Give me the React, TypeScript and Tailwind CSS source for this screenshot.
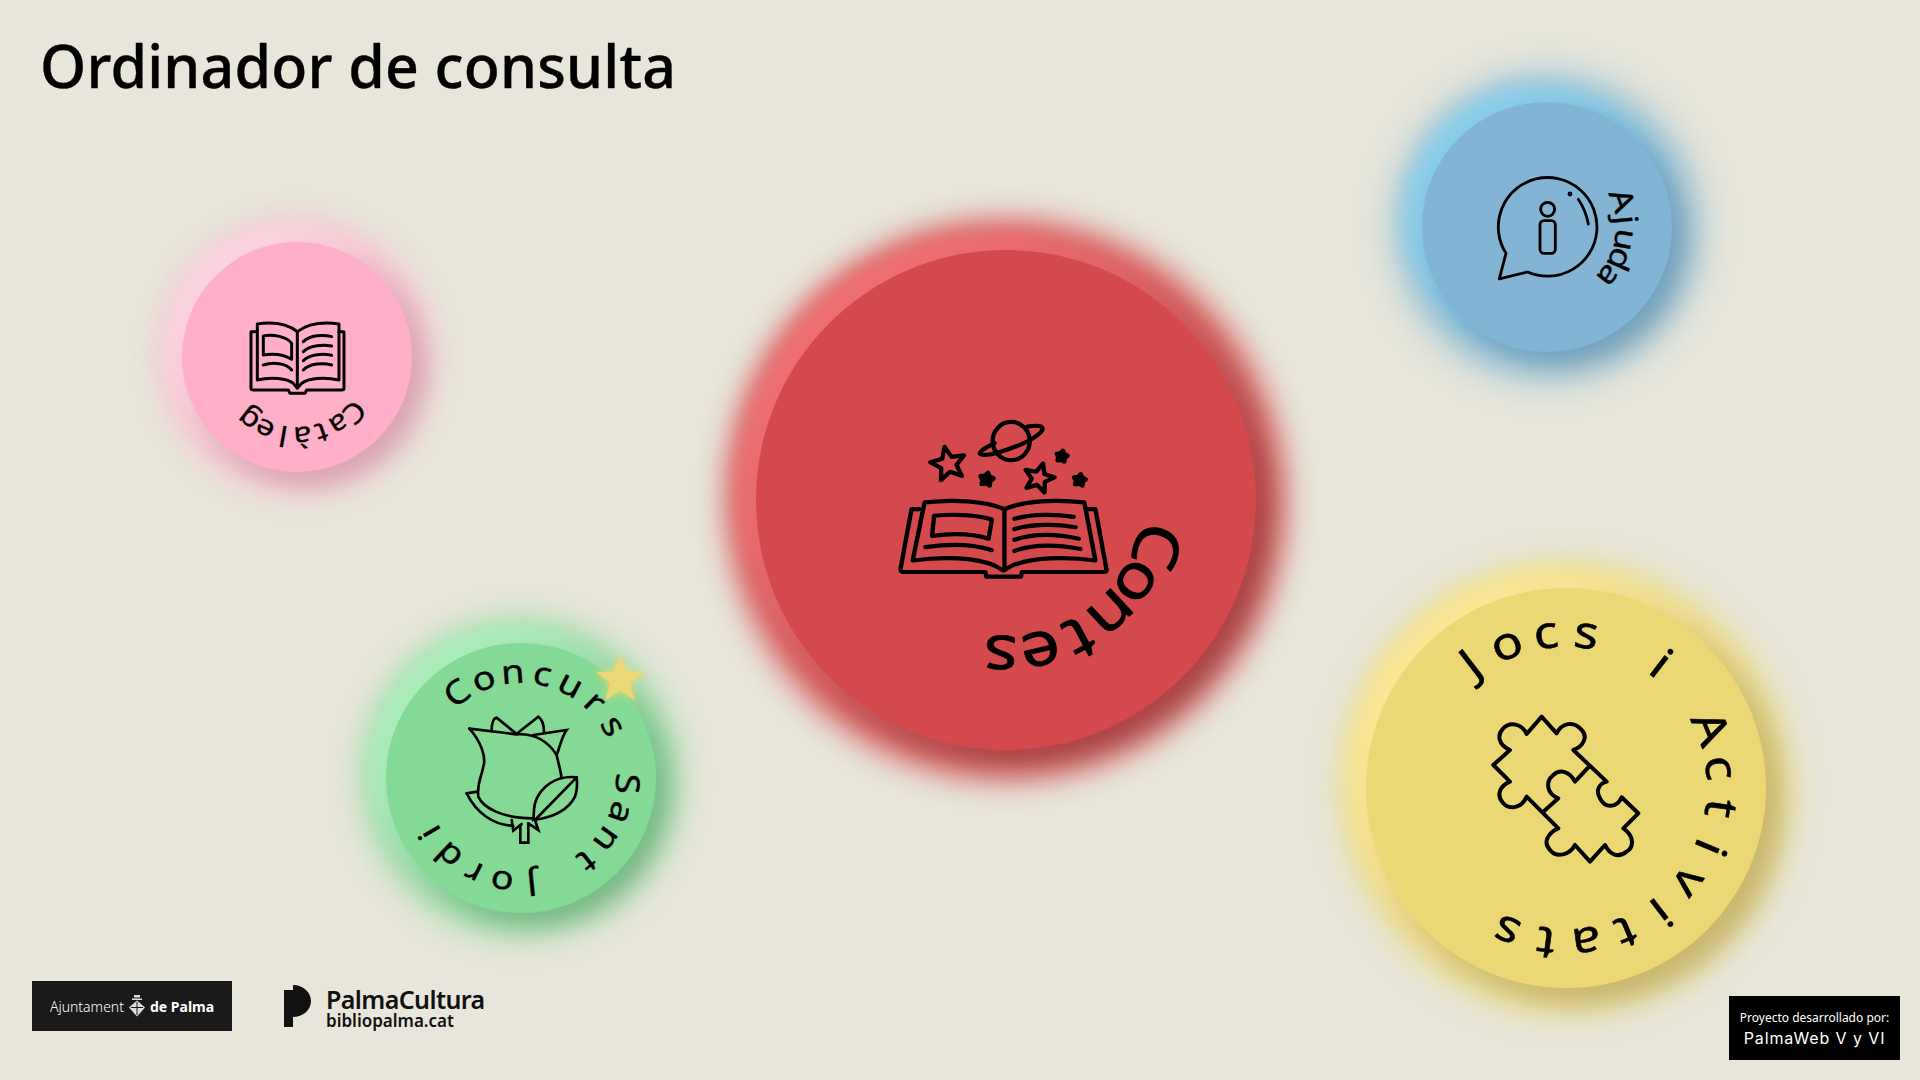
import React from 'react';

const FONT = "'Noto Sans', 'Open Sans', sans-serif";

function starPoints(cx: number, cy: number, r: number, rot: number, inner = 0.45) {
    const pts: string[] = [];
    for (let i = 0; i < 10; i++) {
        const a = ((rot + i * 36 - 90) * Math.PI) / 180;
        const rr = i % 2 === 0 ? r : r * inner;
        pts.push(`${(cx + rr * Math.cos(a)).toFixed(1)},${(cy + rr * Math.sin(a)).toFixed(1)}`);
    }
    return pts.join(' ');
}

interface CurvedProps {
    text: string;
    size: number;
    radius: number;
    fontSize: number;
    start: number;
    step: number;
}

function CurvedText({ text, size, radius, fontSize, start, step }: CurvedProps) {
    const c = size / 2;
    return (
        <g fontFamily={FONT} fontSize={fontSize} fill="#000" stroke="#000" strokeWidth={fontSize * 0.012} strokeLinejoin="round">
            {text.split('').map((ch, i) =>
                ch === ' ' ? null : (
                    <text key={i} textAnchor="middle" transform={`rotate(${start + i * step} ${c} ${c}) translate(${c} ${c - radius}) scale(1.14 1)`}>
                        {ch}
                    </text>
                ),
            )}
        </g>
    );
}

interface BubbleProps {
    className: string;
    size: number;
    children: React.ReactNode;
}

function Bubble({ className, size, children }: BubbleProps) {
    return (
        <div className={`absolute rounded-full ${className}`}>
            <svg width={size} height={size} viewBox={`0 0 ${size} ${size}`} className="block">
                {children}
            </svg>
        </div>
    );
}

export default function App() {
    return (
        <div className="relative flex h-screen w-full flex-col justify-between overflow-hidden bg-[#e8e6da]" style={{ fontFamily: FONT }}>
            <h1 className="pl-[40px] pt-[26px] text-[59px] leading-[78px] font-medium tracking-[0.2px] text-black [-webkit-text-stroke:0.4px_#000]">Ordinador de consulta</h1>

            {/* Catàleg */}
            <Bubble
                size={230}
                className="left-[182px] top-[242px] h-[230px] w-[230px] bg-[#ffafc8] shadow-[12px_12px_22px_2px_rgba(120,70,90,0.24),-11px_-11px_20px_4px_rgba(252,215,228,0.9),0_0_34px_20px_rgba(255,175,200,0.75)]"
            >
                <g transform="translate(-42,-42) scale(0.3333)" fill="none" stroke="#000" strokeWidth="9" strokeLinejoin="round" strokeLinecap="round">
                    <path d="M350,395 L333,395 L333,565 Q333,570 340,570 L445,570 L450,580 L495,580 L500,570 L605,570 Q612,570 612,565 L612,395 L597,395" />
                    <path d="M472,395 C440,370 400,365 352,372 L352,540 C395,530 440,535 460,550 L472,565 L485,550 C505,535 550,530 597,540 L597,372 C545,365 505,370 472,395 Z" />
                    <path d="M472,395 L472,560" />
                    <path d="M370,408 C400,402 440,410 455,430 L455,478 C430,462 400,460 370,465 Z" />
                    <path d="M370,495 C400,485 440,490 455,510" />
                    <path d="M490,425 C510,405 550,403 575,410" />
                    <path d="M490,455 C510,435 550,433 575,438" />
                    <path d="M490,482 C510,462 550,460 575,466" />
                    <path d="M490,510 C510,490 550,488 575,495" />
                </g>
                <CurvedText text="Catàleg" size={230} radius={70} fontSize={28} start={134} step={14} />
            </Bubble>

            {/* Contes */}
            <Bubble
                size={500}
                className="left-[756px] top-[250px] h-[500px] w-[500px] bg-[#d4494b] shadow-[14px_14px_24px_2px_rgba(70,30,30,0.3),-12px_-12px_22px_4px_rgba(240,115,115,1),0_0_32px_28px_rgba(212,73,75,0.95)]"
            >
                <g transform="translate(-56,-50) scale(0.3954,0.3827)" fill="none" stroke="#000" strokeWidth="11" strokeLinejoin="round" strokeLinecap="round">
                    <path d="M555,808 L535,808 L507,965 Q507,972 515,972 L722,972 L724,984 L812,984 L814,972 L1022,972 Q1030,972 1028,965 L1000,808 L980,808" />
                    <path d="M770,808 C720,785 640,782 568,790 L538,942 C620,930 700,935 745,955 L767,968 L790,955 C840,935 920,930 1000,942 L972,790 C900,782 820,785 770,808 Z" />
                    <path d="M770,808 L770,968" />
                    <path d="M592,825 C640,820 700,822 738,835 L730,885 C690,872 640,870 587,878 Z" />
                    <path d="M570,907 C630,898 690,898 738,915" />
                    <path d="M795,833 C840,820 900,820 945,828" />
                    <path d="M795,860 C840,846 900,846 950,855" />
                    <path d="M795,888 C840,872 900,872 958,885" />
                    <path d="M795,917 C840,900 900,900 962,912" />
                    <ellipse cx="787" cy="630" rx="47" ry="50" />
                    <path d="M745,635 C715,650 700,662 712,665 C730,670 790,650 830,630 C860,612 875,598 862,592 C855,588 840,590 828,592" />
                    <polygon points={starPoints(628, 690, 46, -12)} />
                    <polygon points={starPoints(857, 727, 40, 15)} />
                    <polygon points={starPoints(725, 730, 18, 10, 0.6)} fill="#000" />
                    <polygon points={starPoints(915, 670, 15, 10, 0.6)} fill="#000" />
                    <polygon points={starPoints(960, 732, 16, 10, 0.6)} fill="#000" />
                </g>
                <CurvedText text="Contes" size={500} radius={136} fontSize={62} start={107} step={15} />
            </Bubble>

            {/* Concurs Sant Jordi */}
            <Bubble
                size={270}
                className="left-[386px] top-[643px] h-[270px] w-[270px] bg-[#84d994] shadow-[12px_12px_22px_2px_rgba(40,100,60,0.28),-11px_-11px_20px_4px_rgba(175,238,190,1),0_0_34px_22px_rgba(132,217,148,0.85)]"
            >
                <g transform="translate(-46,-43) scale(0.3333)" fill="none" stroke="#000" strokeWidth="8" strokeLinejoin="miter" strokeLinecap="round">
                    <path d="M388,386 C420,420 440,470 430,500 C425,530 410,550 415,590 C430,625 490,655 578,655" />
                    <path d="M388,386 L530,403 C590,400 625,425 650,465 C655,490 662,510 664,530" />
                    <path d="M580,405 L680,390 C665,410 660,440 650,465" />
                    <path d="M455,392 C455,370 460,355 470,353 L525,398" />
                    <path d="M532,400 L595,350 C608,360 612,375 612,395" />
                    <path d="M710,532 C650,525 600,560 585,610 C580,630 582,650 580,660 C620,655 680,640 705,590 C712,570 712,550 710,532 Z" />
                    <path d="M710,532 L585,660" />
                    <path d="M380,580 L412,575" />
                    <path d="M380,580 C410,640 460,675 520,678" />
                    <path d="M515,660 L520,692 L545,672" />
                    <path d="M541,675 L541,728 L565,728 L565,670" />
                    <path d="M565,670 L595,690 L585,660" />
                </g>
                <CurvedText text="Concurs Sant Jordi" size={270} radius={95} fontSize={33} start={-37} step={16.25} />
            </Bubble>

            {/* Ajuda */}
            <Bubble
                size={250}
                className="left-[1422px] top-[102px] h-[250px] w-[250px] bg-[#84b4d4] shadow-[12px_12px_26px_2px_rgba(50,90,120,0.32),-11px_-11px_22px_4px_rgba(138,208,235,1),0_0_38px_26px_rgba(132,186,216,0.9)]"
            >
                <g transform="translate(-42,-42) scale(0.3333)" fill="none" stroke="#000" strokeWidth="8.5" strokeLinejoin="round" strokeLinecap="round">
                    <path d="M378,580 A148,148 0 1 1 443,636 L358,657 Z" />
                    <circle cx="503" cy="448" r="21" />
                    <rect x="480" y="482" width="46" height="98" rx="12" />
                    <path d="M595,418 C610,440 620,465 625,492" />
                    <circle cx="570" cy="402" r="3" />
                </g>
                <CurvedText text="Ajuda" size={250} radius={69} fontSize={31} start={70.4} step={14.5} />
            </Bubble>

            {/* Jocs i Activitats */}
            <Bubble
                size={400}
                className="left-[1366px] top-[588px] h-[400px] w-[400px] bg-[#ebd774] shadow-[14px_14px_24px_2px_rgba(120,100,40,0.3),-11px_-11px_20px_4px_rgba(252,232,150,1),0_0_34px_24px_rgba(235,215,116,0.85)]"
            >
                <g transform="translate(-36,-28) scale(0.3333)" fill="none" stroke="#000" strokeWidth="12" strokeLinejoin="round" strokeLinecap="round">
                    <path d="M635,470 L680,520 C695,490 730,480 755,510 C775,530 760,560 730,570 L830,665 C810,670 795,690 810,715 C825,745 860,745 875,712 L925,760 L880,805 C910,825 915,860 890,875 C865,895 840,885 825,855 L780,905 L735,855 C720,885 680,895 660,870 C640,850 650,820 685,805 L590,710 C575,745 540,750 520,730 C500,710 505,680 540,665 L490,615 L540,570 C505,555 500,525 520,505 C540,485 575,490 590,522 Z" />
                    <path d="M775,622 L735,665 C720,635 690,625 670,645 C645,665 650,700 685,715 L640,755" />
                </g>
                <CurvedText text="Jocs i Activitats" size={400} radius={141} fontSize={45} start={-37.5} step={15} />
            </Bubble>

            {/* estrella */}
            <svg width="60" height="60" viewBox="0 0 60 60" className="absolute left-[590px] top-[648px] drop-shadow-[0_0_4px_rgba(245,215,110,0.9)]">
                <polygon points={starPoints(30, 32, 25, 0, 0.42)} fill="#ecd876" />
            </svg>

            <div className="flex items-end justify-between pb-[20px] pl-[32px] pr-[20px]">
                <div className="mb-[29px] flex items-center gap-[52px]">
                    <div className="flex h-[50px] w-[200px] items-center justify-center gap-[4px] bg-[#1a1a1a] text-[14px] text-white">
                        <span className="font-light">Ajuntament</span>
                        <svg width="18" height="24" viewBox="0 0 18 24" fill="#ddd">
                            <path d="M6 1h6v2.5H6z" />
                            <path d="M4 4.5h10v1.5H4z" />
                            <path d="M9 6.5l8 7-8 9-8-9z" />
                            <path d="M9 8v13M3 13.5h12" stroke="#1a1a1a" strokeWidth="1" />
                        </svg>
                        <span className="font-bold">de Palma</span>
                    </div>
                    <div className="flex items-center gap-[15px] text-[#111]">
                        <svg width="27" height="42" viewBox="0 0 27 42" fill="#111">
                            <path d="M0 5h9V0c10 0 18 7 18 16s-8 16-18 16v10H0z" />
                        </svg>
                        <div className="flex flex-col pt-[6px]">
                            <span className="text-[25px] leading-[24px] font-semibold tracking-[-0.6px]">PalmaCultura</span>
                            <span className="text-[17px] leading-[20px] font-semibold">bibliopalma.cat</span>
                        </div>
                    </div>
                </div>
                <div className="flex h-[64px] w-[171px] flex-col items-center justify-center bg-black pt-[2px] text-white">
                    <span className="text-[12px] leading-[18px]">Proyecto desarrollado por:</span>
                    <span className="text-[16px] leading-[22px] tracking-[0.9px] font-['Inter']">PalmaWeb V y VI</span>
                </div>
            </div>
        </div>
    );
}
